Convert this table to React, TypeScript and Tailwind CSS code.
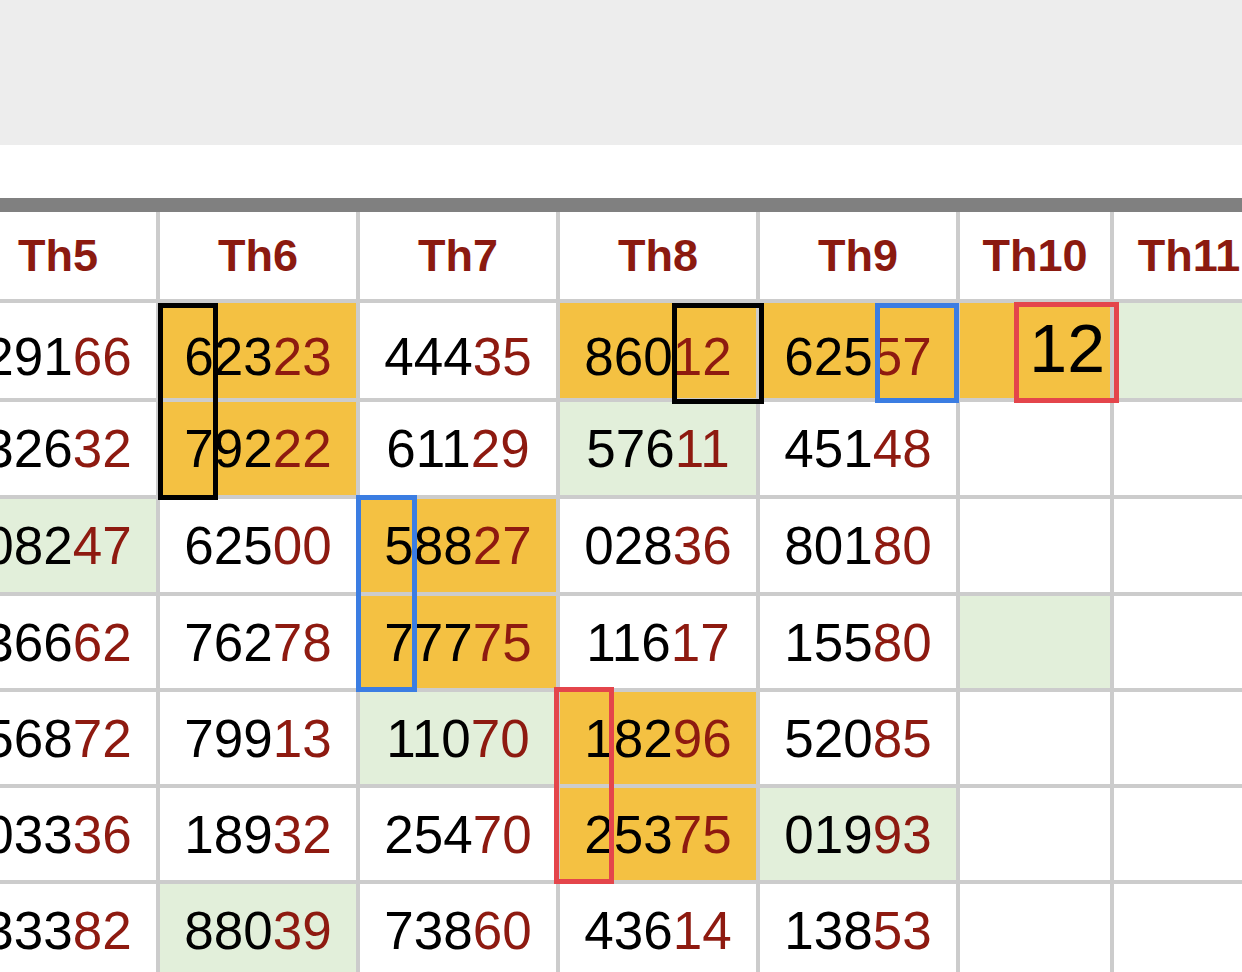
import React from "react";

type Cell = { v: string; bg?: "y" | "g" | "w" };

const rows: Cell[][] = [
  [
    { v: "29166" },
    { v: "62323", bg: "y" },
    { v: "44435" },
    { v: "86012", bg: "y" },
    { v: "62557", bg: "y" },
    { v: "BIG", bg: "y" },
    { v: "", bg: "g" },
  ],
  [
    { v: "32632" },
    { v: "79222", bg: "y" },
    { v: "61129" },
    { v: "57611", bg: "g" },
    { v: "45148" },
    { v: "" },
    { v: "" },
  ],
  [
    { v: "08247", bg: "g" },
    { v: "62500" },
    { v: "58827", bg: "y" },
    { v: "02836" },
    { v: "80180" },
    { v: "" },
    { v: "" },
  ],
  [
    { v: "36662" },
    { v: "76278" },
    { v: "77775", bg: "y" },
    { v: "11617" },
    { v: "15580" },
    { v: "", bg: "g" },
    { v: "" },
  ],
  [
    { v: "56872" },
    { v: "79913" },
    { v: "11070", bg: "g" },
    { v: "18296", bg: "y" },
    { v: "52085" },
    { v: "" },
    { v: "" },
  ],
  [
    { v: "03336" },
    { v: "18932" },
    { v: "25470" },
    { v: "25375", bg: "y" },
    { v: "01993", bg: "g" },
    { v: "" },
    { v: "" },
  ],
  [
    { v: "33382" },
    { v: "88039", bg: "g" },
    { v: "73860" },
    { v: "43614" },
    { v: "13853" },
    { v: "" },
    { v: "" },
  ],
];

const heights = ["h-[95px]", "h-[93px]", "h-[93px]", "h-[92px]", "h-[92px]", "h-[92px]", "h-[93px]"];
const headers = ["Th5", "Th6", "Th7", "Th8", "Th9", "Th10", "Th11"];

function bgClass(bg?: string) {
  if (bg === "y") return "bg-[#f4c142]";
  if (bg === "g") return "bg-[#e2efda]";
  return "bg-white";
}

export default function App() {
  return (
    <div
      className="relative w-[1242px] h-[972px] overflow-hidden bg-white"
      style={{ fontFamily: '"Liberation Sans", Arial, Helvetica, sans-serif' }}
    >
      <div className="h-[145px] bg-[#ededed]" />
      <div className="h-[53px] bg-white" />
      <div className="ml-[-44px] w-[1308px]">
        <div className="h-[14px] bg-[#808080]" />
        <div className="grid grid-cols-[196px_196px_196px_196px_196px_150px_150px] gap-[4px] bg-[#cccccc] pl-[4px]">
          {headers.map((h) => (
            <div
              key={h}
              className="h-[87px] bg-white flex items-center justify-center text-[45px] leading-[52px] font-bold text-[#8b1a10]"
            >
              {h}
            </div>
          ))}
          {rows.map((r, ri) =>
            r.map((c, ci) => {
              if (c.v === "BIG") {
                return (
                  <div
                    key={`${ri}-${ci}`}
                    className={`${heights[ri]} ${bgClass(c.bg)} flex items-center justify-end pr-[5px] pb-[5px] text-[68px] leading-none text-black`}
                  >
                    12
                  </div>
                );
              }
              return (
                <div
                  key={`${ri}-${ci}`}
                  className={`${heights[ri]} ${bgClass(c.bg)} flex items-center justify-center text-[53px] leading-[61px] text-black ${ri === 0 ? "pt-[12px]" : ""}`}
                >
                  {c.v && (
                    <span>
                      {c.v.slice(0, 3)}
                      <span className="text-[#8e1a10]">{c.v.slice(3)}</span>
                    </span>
                  )}
                </div>
              );
            })
          )}
        </div>
      </div>

      {/* highlight boxes */}
      <div className="absolute left-[158px] top-[303px] w-[60px] h-[197px] border-[5px] border-black" />
      <div className="absolute left-[672px] top-[303px] w-[92px] h-[101px] border-[5px] border-black" />
      <div className="absolute left-[875px] top-[303px] w-[84px] h-[100px] border-[5px] border-[#3b7de2]" />
      <div className="absolute left-[1014px] top-[302px] w-[105px] h-[101px] border-[5px] border-[#e4454b]" />
      <div className="absolute left-[356px] top-[495px] w-[61px] h-[197px] border-[5px] border-[#3b7de2]" />
      <div className="absolute left-[554px] top-[687px] w-[60px] h-[197px] border-[5px] border-[#e4454b]" />
    </div>
  );
}
